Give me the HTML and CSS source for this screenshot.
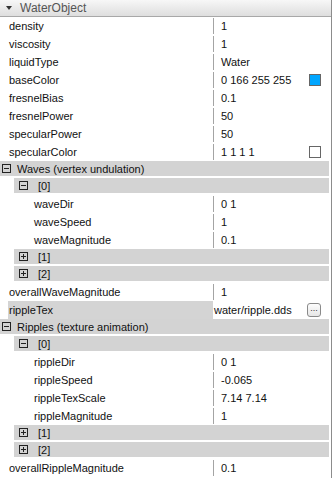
FILE: index.html
```html
<!DOCTYPE html>
<html lang="en">
<head>
    <meta charset="UTF-8">
    <title>WaterObject</title>
    <link rel="stylesheet" href="styles.css">
</head>
<body>
    <div class="panel">
        <div class="header"><span class="arrow"></span>WaterObject</div>

        <div class="row"><div class="label">density</div><div class="value">1</div></div>
        <div class="row"><div class="label">viscosity</div><div class="value">1</div></div>
        <div class="row"><div class="label">liquidType</div><div class="value">Water</div></div>
        <div class="row"><div class="label">baseColor</div><div class="value">0 166 255 255<span class="swatch blue"></span></div></div>
        <div class="row"><div class="label">fresnelBias</div><div class="value">0.1</div></div>
        <div class="row"><div class="label">fresnelPower</div><div class="value">50</div></div>
        <div class="row"><div class="label">specularPower</div><div class="value">50</div></div>
        <div class="row"><div class="label">specularColor</div><div class="value">1 1 1 1<span class="swatch"></span></div></div>

        <!-- Waves -->
        <div class="group"><div class="band"><span class="toggle"></span>Waves (vertex undulation)</div></div>
        <div class="group sub"><div class="band"><span class="toggle"></span>[0]</div></div>
        <div class="row sub"><div class="label">waveDir</div><div class="value">0 1</div></div>
        <div class="row sub"><div class="label">waveSpeed</div><div class="value">1</div></div>
        <div class="row sub"><div class="label">waveMagnitude</div><div class="value">0.1</div></div>
        <div class="group sub"><div class="band"><span class="toggle plus"></span>[1]</div></div>
        <div class="group sub"><div class="band"><span class="toggle plus"></span>[2]</div></div>
        <div class="row"><div class="label">overallWaveMagnitude</div><div class="value">1</div></div>

        <div class="row editing">
            <div class="label">rippleTex</div>
            <div class="value"><span class="path">water/ripple.dds</span><span class="browse">...</span></div>
        </div>

        <!-- Ripples -->
        <div class="group"><div class="band"><span class="toggle"></span>Ripples (texture animation)</div></div>
        <div class="group sub"><div class="band"><span class="toggle"></span>[0]</div></div>
        <div class="row sub"><div class="label">rippleDir</div><div class="value">0 1</div></div>
        <div class="row sub"><div class="label">rippleSpeed</div><div class="value">-0.065</div></div>
        <div class="row sub"><div class="label">rippleTexScale</div><div class="value">7.14 7.14</div></div>
        <div class="row sub"><div class="label">rippleMagnitude</div><div class="value">1</div></div>
        <div class="group sub"><div class="band"><span class="toggle plus"></span>[1]</div></div>
        <div class="group sub"><div class="band"><span class="toggle plus"></span>[2]</div></div>
        <div class="row"><div class="label">overallRippleMagnitude</div><div class="value">0.1</div></div>
    </div>
</body>
</html>
```

FILE: styles.css
```css
/* Property inspector */
body {
    margin: 0;
    padding: 0;
    background: #fff;
    font-family: "Liberation Sans", Arial, sans-serif;
    font-size: 11px;
    color: #111;
}
.panel {
    width: 331px;
    height: 478px;
    border-right: 1px solid #8c8c8c;
    overflow: hidden;
}
.header {
    height: 16px;
    display: flex;
    align-items: center;
    background: linear-gradient(#f7f7f7, #dedede);
    border-bottom: 1px solid #a8a8a8;
    color: #555;
    font-size: 12px;
}
.arrow {
    width: 0;
    height: 0;
    margin: 0 8px 0 6px;
    border-left: 3px solid transparent;
    border-right: 3px solid transparent;
    border-top: 4px solid #333;
}
.row {
    height: 18px;
    display: flex;
    align-items: center;
}
.label {
    width: 213px;
    flex-shrink: 0;
    box-sizing: border-box;
    padding-left: 9px;
    white-space: nowrap;
}
.row.sub .label {
    padding-left: 34px;
}
.value {
    flex: 1;
    height: 16px;
    display: flex;
    align-items: center;
    border-left: 1px solid #a4a4a4;
    padding-left: 7px;
    padding-right: 10px;
    position: relative;
}
.swatch {
    width: 10px;
    height: 10px;
    margin-left: auto;
    border: 1px solid #666;
    background: #fff;
}
.swatch.blue {
    background: #00a6ff;
}
.row.editing .label {
    align-self: stretch;
    display: flex;
    align-items: center;
    margin-left: 8px;
    width: 205px;
    padding-left: 1px;
    background: #d4d4d4;
}
.row.editing .value {
    border-left: none;
    padding-left: 3px;
    height: 18px;
    overflow: hidden;
}
.path {
    margin-left: -2px;
}
.browse {
    margin-left: auto;
    width: 12px;
    height: 12px;
    border: 1px solid #8a8a8a;
    border-radius: 3px;
    background: linear-gradient(#fdfdfd, #e6e6e6);
    font-size: 9px;
    line-height: 9px;
    text-align: center;
    color: #333;
}
.group {
    height: 17px;
}
.band {
    height: 15px;
    margin-right: 2px;
    display: flex;
    align-items: center;
    background: #d3d3d3;
    white-space: nowrap;
}
.group.sub .band {
    margin-left: 14px;
}
.toggle {
    width: 7px;
    height: 7px;
    border: 1px solid #222;
    margin: 0 6px 0 2px;
    position: relative;
    flex-shrink: 0;
}
.group.sub .toggle {
    margin: 0 10px 0 5px;
}
.toggle::before {
    content: "";
    position: absolute;
    left: 1px;
    right: 1px;
    top: 3px;
    height: 1px;
    background: #222;
}
.toggle.plus::after {
    content: "";
    position: absolute;
    top: 1px;
    bottom: 1px;
    left: 3px;
    width: 1px;
    background: #222;
}
```
